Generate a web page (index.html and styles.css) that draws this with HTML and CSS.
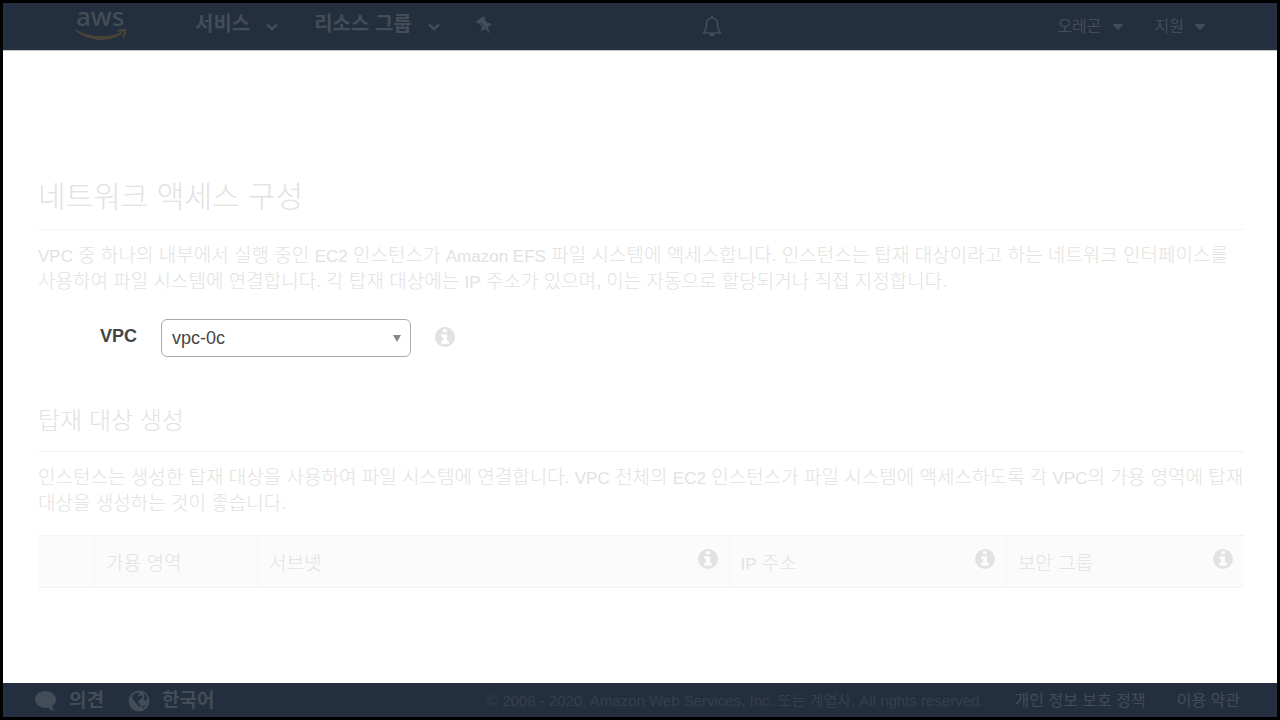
FILE: index.html
```html
<!DOCTYPE html>
<html lang="ko">
<head>
  <meta charset="UTF-8">
  <title>네트워크 액세스 구성</title>
  <link rel="stylesheet" href="styles.css">
</head>
<body>

<svg class="sprite" aria-hidden="true">
  <symbol id="icon-info" viewBox="0 0 20 20">
    <path fill-rule="evenodd" d="M10 0a10 10 0 1 0 0 20a10 10 0 0 0 0-20zM8 2.300h4v3H8zM6.200 7.200h5.800v6.500h1.800v3.100H6.200v-3.100H8V10H6.200z"/>
  </symbol>
  <symbol id="icon-chevron" viewBox="0 0 12 8">
    <path d="M.9 1.400 6 5.900l5.100-4.500" fill="none" stroke="currentColor" stroke-width="2.600"/>
  </symbol>
  <symbol id="icon-caret" viewBox="0 0 10 6">
    <path d="M1 0h8a1 1 0 0 1 .6 1.500L5.600 5.600a1 1 0 0 1-1.200 0L.4 1.500A1 1 0 0 1 1 0z"/>
  </symbol>
</svg>

<header class="navbar">
  <a class="logo" href="#">
    <span class="logo-text">aws</span>
    <svg class="logo-smile" viewBox="0 0 52 12">
      <path d="M.6.6C14 8.500 31 9.500 45.500 3.500c1.500-.6 2.500.8 1.200 1.800C33 14 13 12.500.2 1.500-.2 1 .2.400.6.600z"/>
      <path d="M42 1.600C44.500-.3 50-.3 51 .6c.9 1.200-.3 6.500-3 8.900-.5.4-1 .1-.8-.4.8-1.900 1.800-5.200 1.200-6-.6-.8-4.200-.6-6-.4-.6 0-.9-.6-.4-1.100z"/>
    </svg>
  </a>
  <nav class="menu">
    <button class="menu-item">서비스 <svg class="chevron"><use href="#icon-chevron"/></svg></button>
    <button class="menu-item">리소스 그룹 <svg class="chevron"><use href="#icon-chevron"/></svg></button>
    <button class="icon-button" aria-label="고정">
      <svg class="pin" viewBox="0 0 16 18">
        <path d="M0 5.400 7.500.2l1.800 1.600-.6 1.600 2.800 3.900c1.300-.5 2.900-.2 4.100 1.200l-4 2.700 2.300 5.700-.5.300-4.100-4.500-3.500 2.500c-.8-1.400-.6-3 .2-4.200L3.200 7.100l-1.800.4z"/>
        <path class="pin-shine" d="m4.700 6.300 3.100 4.400"/>
      </svg>
    </button>
  </nav>
  <button class="icon-button" aria-label="알림">
    <svg class="bell" viewBox="0 0 20 22">
      <path d="M1.500 18c2.400-2.500 2.700-4 2.900-8.500C4.600 5.500 7 3 10 3s5.400 2.500 5.600 6.500c.2 4.500.5 6 2.900 8.500z" fill="none" stroke="currentColor" stroke-width="1.600" stroke-linejoin="round"/>
      <path d="M9 .4h2V3H9zM7.300 18.500h5.400a2.700 2.900 0 0 1-5.400 0z"/>
    </svg>
  </button>
  <nav class="account">
    <button class="account-item">오레곤 <svg class="caret"><use href="#icon-caret"/></svg></button>
    <button class="account-item">지원 <svg class="caret"><use href="#icon-caret"/></svg></button>
  </nav>
</header>

<main class="content">
  <h1>네트워크 액세스 구성</h1>
  <p><span lang="en">VPC</span> 중 하나의 내부에서 실행 중인 <span lang="en">EC2</span> 인스턴스가 <span lang="en">Amazon EFS</span> 파일 시스템에 액세스합니다. 인스턴스는 탑재 대상이라고 하는 네트워크 인터페이스를 사용하여 파일 시스템에 연결합니다. 각 탑재 대상에는 <span lang="en">IP</span> 주소가 있으며, 이는 자동으로 할당되거나 직접 지정합니다.</p>

  <div class="field">
    <label for="vpc">VPC</label>
    <div class="select-box">
      <select id="vpc">
        <option>vpc-0c</option>
      </select>
      <svg class="select-arrow" viewBox="0 0 8 7"><path d="M0 0h8L4 7z"/></svg>
    </div>
    <svg class="info"><use href="#icon-info"/></svg>
  </div>

  <h2>탑재 대상 생성</h2>
  <p>인스턴스는 생성한 탑재 대상을 사용하여 파일 시스템에 연결합니다. <span lang="en">VPC</span> 전체의 <span lang="en">EC2</span> 인스턴스가 파일 시스템에 액세스하도록 각 <span lang="en">VPC</span>의 가용 영역에 탑재 대상을 생성하는 것이 좋습니다.</p>

  <table class="targets">
    <colgroup>
      <col class="col-check">
      <col class="col-zone">
      <col class="col-subnet">
      <col class="col-ip">
      <col class="col-group">
    </colgroup>
    <thead>
      <tr>
        <th></th>
        <th><div class="head">가용 영역</div></th>
        <th><div class="head">서브넷 <svg class="info"><use href="#icon-info"/></svg></div></th>
        <th><div class="head"><span><span lang="en">IP</span> 주소</span> <svg class="info"><use href="#icon-info"/></svg></div></th>
        <th><div class="head">보안 그룹 <svg class="info"><use href="#icon-info"/></svg></div></th>
      </tr>
    </thead>
  </table>
</main>

<footer class="footer">
  <a class="footer-main" href="#">
    <svg class="footer-icon" viewBox="0 0 22 22">
      <path d="M10.500 1C16.500 1 21 4.800 21 9.500c0 2.700-1.500 5-3.800 6.500.2 2 1 3.600 2.600 5-3-.2-5.200-1.400-6.600-3.300-.9.200-1.800.3-2.700.3C4.500 18 0 14.200 0 9.500S4.500 1 10.500 1z"/>
    </svg>
    의견
  </a>
  <a class="footer-main" href="#">
    <svg class="footer-icon" viewBox="0 0 22 22">
      <circle cx="11" cy="11" r="10.500"/>
      <path class="land" d="M4.500 5.500 7 3.300l3-.8 1.500 1-1.800 1.600.8 1.400 2-1.200 2.200.9-1.500 2.700-2.600 1.800-.9 1.600 1.800 1.500 1.500 2.600-1.500.8-2.800-3.300-2.300-2.800-1.900-2.400zM15.500 3.500l2.300 1.700 1.500 3.300-1.500 2.200-2.200-1.200.8-2.800zM14.300 16.200l2.800-1.200-.9 2.500-1.800.6z"/>
    </svg>
    한국어
  </a>
  <span class="copyright">© 2008 - 2020, Amazon Web Services, Inc. 또는 계열사. All rights reserved.</span>
  <a class="footer-link" href="#">개인 정보 보호 정책</a>
  <a class="footer-link" href="#">이용 약관</a>
</footer>

</body>
</html>
```

FILE: styles.css
```css
* {
  box-sizing: border-box;
}
body {
  margin: 0;
  min-height: 100vh;
  display: flex;
  flex-direction: column;
  border: 3px solid #000;
  background: #fff;
  color: #e2e2e2;
  font-family: "Liberation Sans", "Noto Sans CJK KR", sans-serif;
  font-size: 18px;
  line-height: 26px;
}
svg {
  fill: currentColor;
  flex-shrink: 0;
}
button {
  display: flex;
  align-items: center;
  padding: 0;
  border: none;
  background: none;
  color: inherit;
  font: inherit;
  white-space: nowrap;
  cursor: pointer;
}
a {
  color: inherit;
  text-decoration: none;
}
.sprite {
  display: none;
}

/* top bar */
.navbar {
  display: flex;
  align-items: center;
  height: 48px;
  padding: 0 72px;
  border-bottom: 1px solid #c4c6c8;
  background: #232f3e;
  color: #424d58;
}
.logo {
  display: flex;
  flex-direction: column;
  width: 52px;
  padding-bottom: 10px;
}
.logo-text {
  padding-left: 1px;
  font-family: "Noto Sans", sans-serif;
  font-size: 26px;
  font-weight: 500;
  line-height: 26px;
}
.logo-smile {
  width: 52px;
  height: 12px;
  color: #4b4338;
}
.menu {
  display: flex;
  align-items: center;
  gap: 36px;
  margin-left: 68px;
  padding-bottom: 5px;
}
.menu-item {
  gap: 16px;
  font-size: 20px;
  font-weight: bold;
}
.chevron {
  width: 12px;
  height: 8px;
  margin-top: 5px;
}
.pin {
  width: 16px;
  height: 18px;
  margin-top: 2px;
}
.pin-shine {
  fill: none;
  stroke: #232f3e;
}
.menu + .icon-button {
  margin-left: 210px;
}
.bell {
  width: 20px;
  height: 22px;
  margin-bottom: 2px;
}
.account {
  display: flex;
  gap: 32px;
  margin-left: auto;
}
.account-item {
  gap: 11px;
  font-size: 16px;
}
.caret {
  width: 10px;
  height: 6px;
}

/* page body */
.content {
  flex: 1;
  padding: 123px 33px 40px 35px;
}
h1,
h2,
p,
.targets {
  font-family: "Noto Sans CJK KR", sans-serif;
}
[lang="en"] {
  font-family: "Liberation Sans", sans-serif;
  font-size: 17px;
  line-height: 1;
}
h1,
h2 {
  margin: 0 0 11px;
  border-bottom: 1px solid #f4f4f4;
  font-weight: 300;
}
h1 {
  padding-bottom: 15px;
  font-size: 30px;
  line-height: 40px;
}
h2 {
  padding-bottom: 16px;
  font-size: 24px;
  line-height: 32px;
}
p {
  margin: 0;
  font-size: 19px;
  font-weight: 300;
}
.field {
  display: flex;
  align-items: center;
  gap: 24px;
  margin: 26px 0 46px;
  padding-left: 62px;
}
.field label {
  color: #444;
  font-weight: bold;
  padding-bottom: 4px;
}
.select-box {
  position: relative;
}
.select-box select {
  appearance: none;
  display: block;
  width: 250px;
  height: 38px;
  padding: 0 10px;
  border: 1px solid #aaa;
  border-radius: 6px;
  background: #fff;
  color: #444;
  font: inherit;
}
.select-arrow {
  position: absolute;
  top: 16px;
  right: 10px;
  width: 8px;
  height: 7px;
  color: #888;
  pointer-events: none;
}
.info {
  width: 20px;
  height: 20px;
  margin-bottom: 2px;
}

.targets {
  width: 100%;
  margin-top: 20px;
  table-layout: fixed;
  border-collapse: collapse;
  font-size: 19px;
}
.targets th {
  height: 52px;
  padding: 0 11px;
  border: solid #f4f4f4;
  border-width: 1px 0;
  background: #fbfbfb;
  font-weight: 300;
  text-align: left;
}
.targets th + th {
  border-left: 1px solid #f4f4f4;
}
.head {
  display: flex;
  align-items: center;
  justify-content: space-between;
}
.head .info {
  margin-bottom: 5px;
}
.col-check {
  width: 4.7%;
}
.col-zone {
  width: 13.5%;
}
.col-subnet {
  width: 39.1%;
}
.col-ip {
  width: 23%;
}
.col-group {
  width: 19.7%;
}

/* bottom bar */
.footer {
  display: flex;
  align-items: center;
  height: 34px;
  padding: 2px 37px 0 32px;
  background: #232f3e;
  color: #424d58;
  white-space: nowrap;
}
.footer-main {
  display: flex;
  align-items: center;
  gap: 12px;
  margin-right: 24px;
  font-size: 19px;
  font-weight: bold;
}
.footer-icon {
  width: 22px;
  height: 22px;
}
.land {
  fill: #232f3e;
}
.copyright {
  margin-left: auto;
  color: #35404d;
  font-size: 15px;
}
.footer-link {
  margin-left: 31px;
  font-size: 16px;
}
```
